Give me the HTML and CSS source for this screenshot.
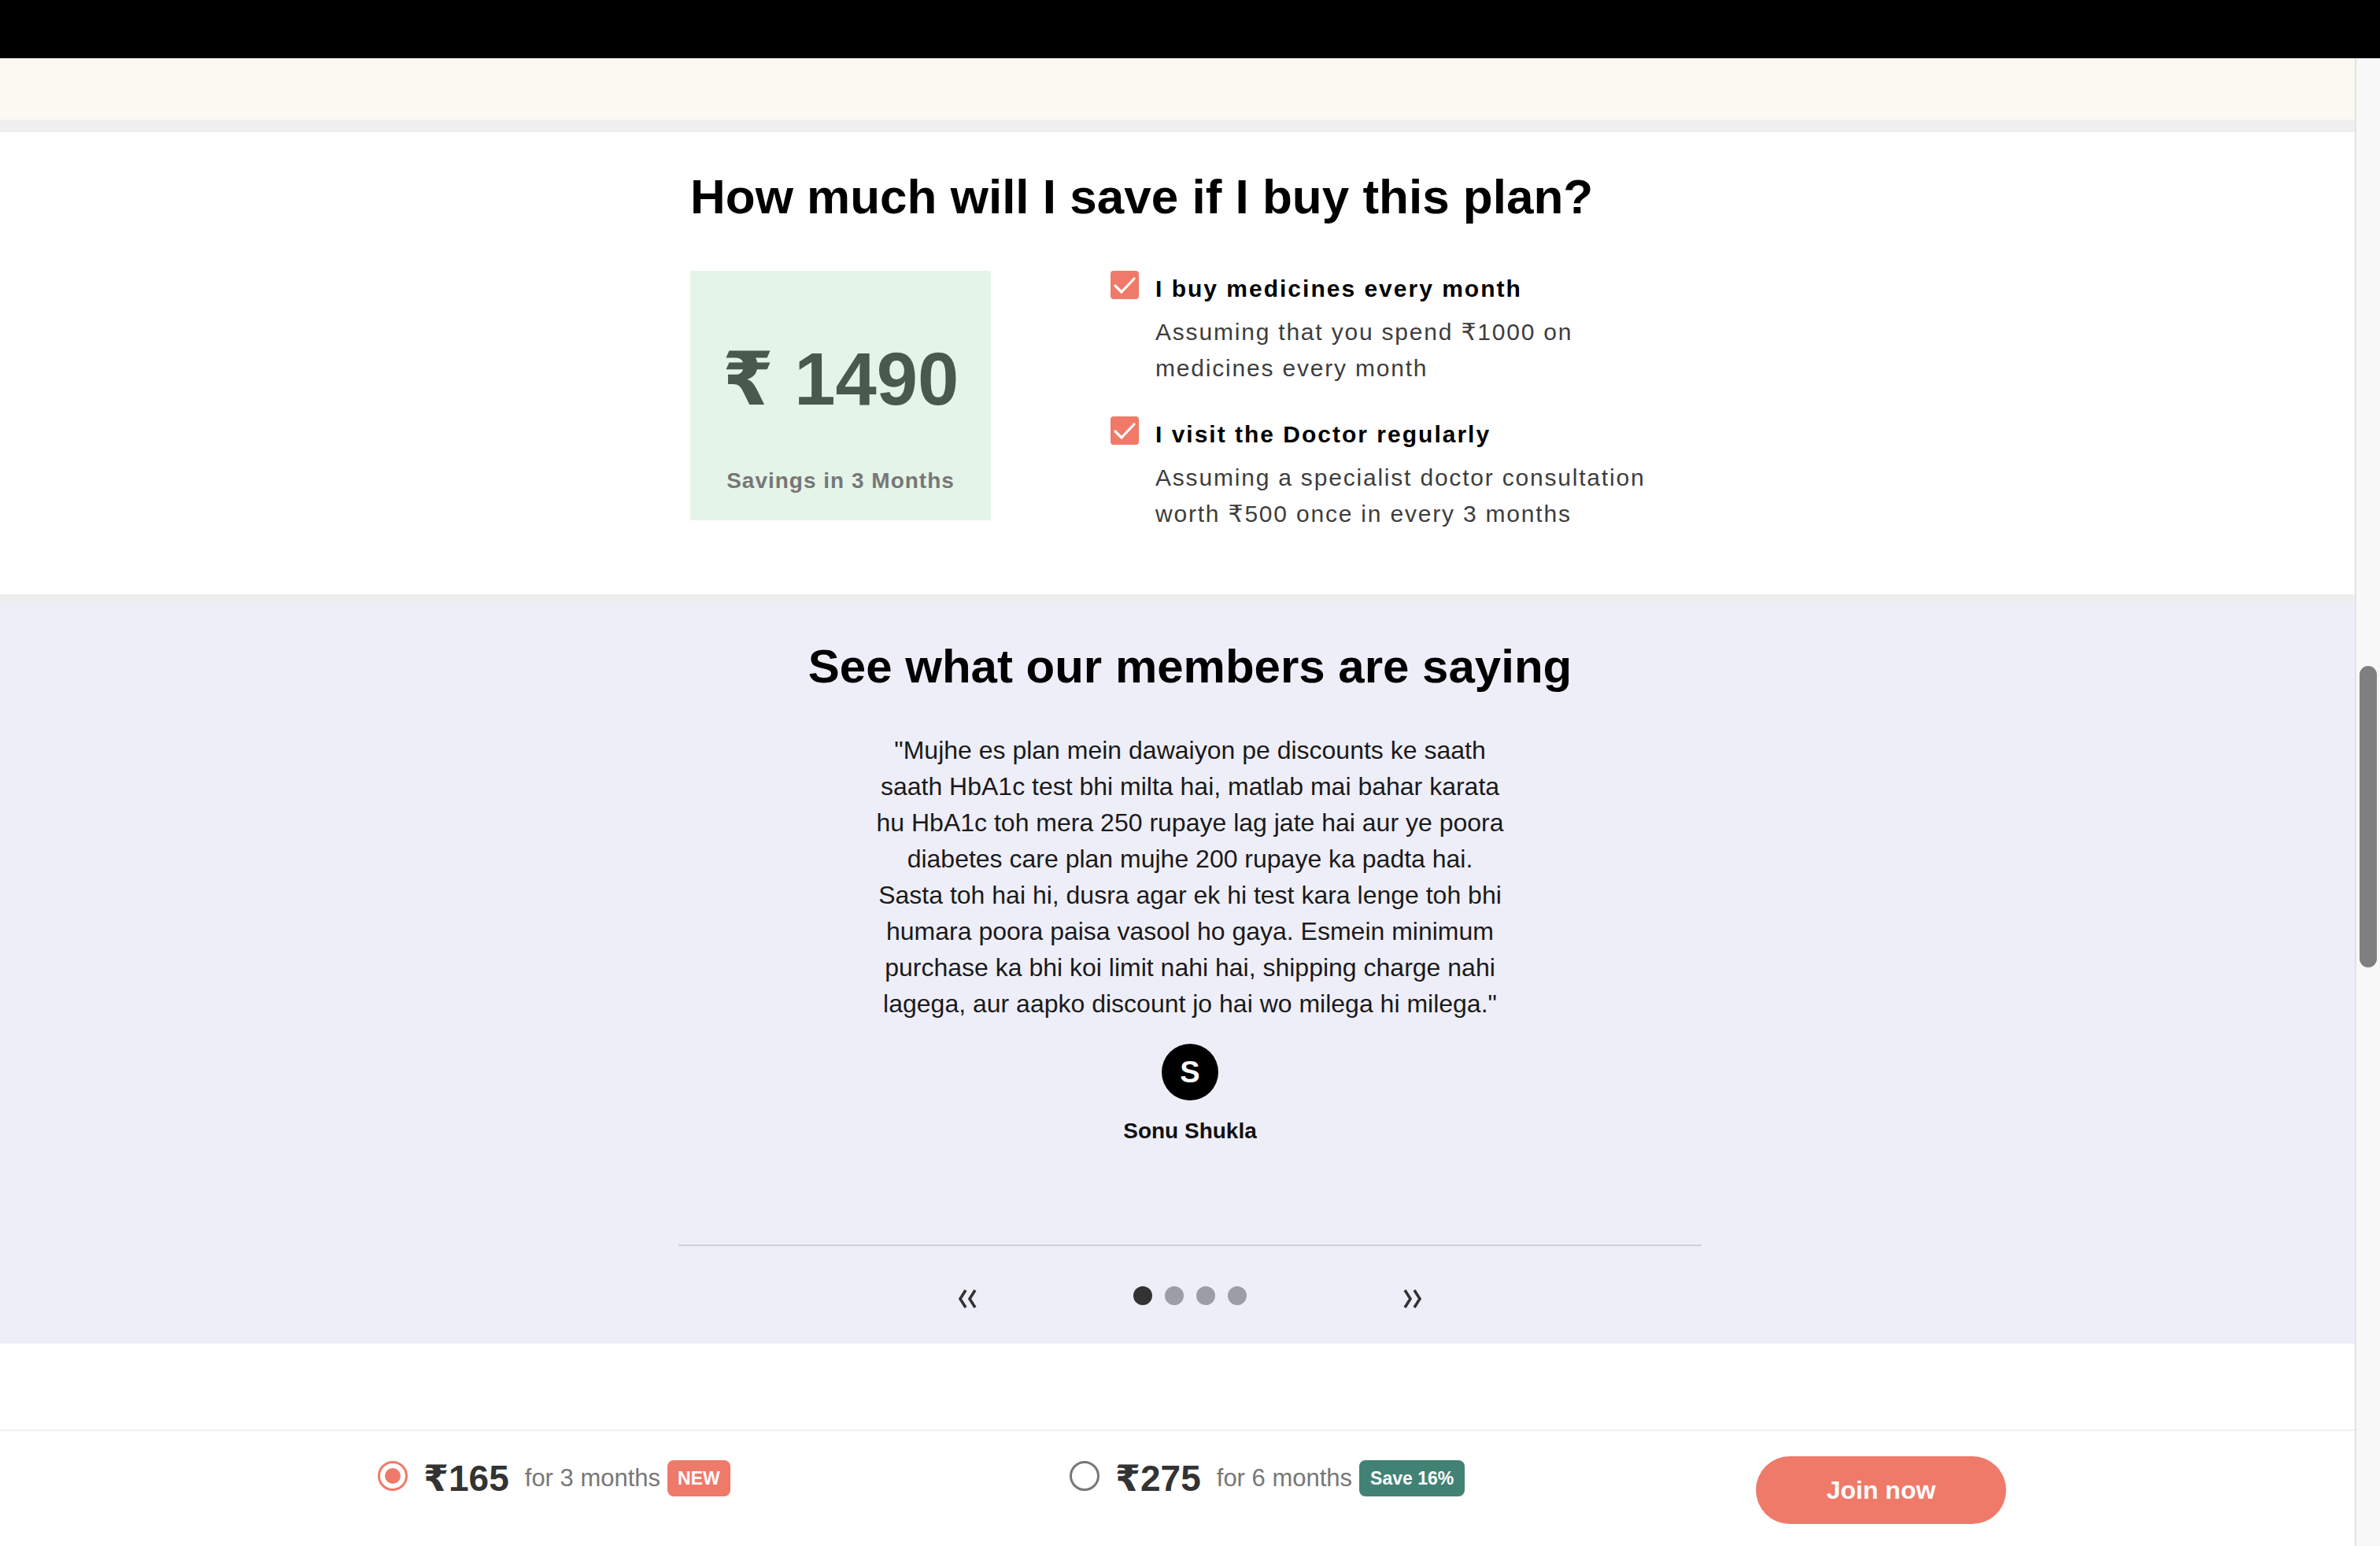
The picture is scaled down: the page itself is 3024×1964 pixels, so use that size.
FILE: index.html
```html
<!DOCTYPE html>
<html lang="en">
<head>
<meta charset="utf-8">
<title>Plan savings</title>
<link rel="stylesheet" href="styles.css">
</head>
<body>
<div class="topbar"></div>
<div class="cream-band"></div>
<div class="gray-band"></div>

<section class="savings">
  <div class="container">
    <h1 class="savings-title">How much will I save if I buy this plan?</h1>
    <div class="savings-row">
      <div class="savings-box">
        <div class="savings-amount">₹ 1490</div>
        <div class="savings-label">Savings in 3 Months</div>
      </div>
      <div class="savings-list">
        <div class="savings-item">
          <svg class="check" width="36" height="36" viewBox="0 0 36 36"><rect width="36" height="36" rx="4" fill="#ef7a6a"/><polyline points="6,19 14,27 30,10" fill="none" stroke="#fff" stroke-width="3.2" stroke-linecap="round" stroke-linejoin="round"/></svg>
          <div class="item-text">
            <div class="item-title">I buy medicines every month</div>
            <div class="item-desc">Assuming that you spend ₹1000 on<br>medicines every month</div>
          </div>
        </div>
        <div class="savings-item">
          <svg class="check" width="36" height="36" viewBox="0 0 36 36"><rect width="36" height="36" rx="4" fill="#ef7a6a"/><polyline points="6,19 14,27 30,10" fill="none" stroke="#fff" stroke-width="3.2" stroke-linecap="round" stroke-linejoin="round"/></svg>
          <div class="item-text">
            <div class="item-title">I visit the Doctor regularly</div>
            <div class="item-desc">Assuming a specialist doctor consultation<br>worth ₹500 once in every 3 months</div>
          </div>
        </div>
      </div>
    </div>
  </div>
</section>

<div class="section-sep"></div>

<section class="reviews">
  <h2 class="reviews-title">See what our members are saying</h2>
  <p class="quote">"Mujhe es plan mein dawaiyon pe discounts ke saath<br>saath HbA1c test bhi milta hai, matlab mai bahar karata<br>hu HbA1c toh mera 250 rupaye lag jate hai aur ye poora<br>diabetes care plan mujhe 200 rupaye ka padta hai.<br>Sasta toh hai hi, dusra agar ek hi test kara lenge toh bhi<br>humara poora paisa vasool ho gaya. Esmein minimum<br>purchase ka bhi koi limit nahi hai, shipping charge nahi<br>lagega, aur aapko discount jo hai wo milega hi milega."</p>
  <div class="avatar">S</div>
  <div class="reviewer">Sonu Shukla</div>
  <div class="reviews-divider"></div>
  <div class="carousel-nav">
    <svg class="arrow" width="28" height="24" viewBox="0 0 28 24"><polyline points="12,1 5,12 12,23" fill="none" stroke="#333" stroke-width="3.6"/><polyline points="24,1 17,12 24,23" fill="none" stroke="#333" stroke-width="3.6"/></svg>
    <div class="dots">
      <span class="dot dot-active"></span>
      <span class="dot"></span>
      <span class="dot"></span>
      <span class="dot"></span>
    </div>
    <svg class="arrow" width="28" height="24" viewBox="0 0 28 24"><polyline points="4,1 11,12 4,23" fill="none" stroke="#333" stroke-width="3.6"/><polyline points="16,1 23,12 16,23" fill="none" stroke="#333" stroke-width="3.6"/></svg>
  </div>
</section>

<div class="spacer"></div>

<footer class="plan-bar">
  <div class="plan-option">
    <span class="radio radio-on"><span class="radio-dot"></span></span>
    <span class="plan-price">₹165</span>
    <span class="plan-period">for 3 months</span>
    <span class="badge badge-new">NEW</span>
  </div>
  <div class="plan-option">
    <span class="radio"></span>
    <span class="plan-price">₹275</span>
    <span class="plan-period">for 6 months</span>
    <span class="badge badge-save">Save 16%</span>
  </div>
  <button class="join-btn">Join now</button>
</footer>

<div class="scrollbar"><div class="scroll-thumb"></div></div>
</body>
</html>
```

FILE: styles.css
```css
* { box-sizing: border-box; }

html, body {
  margin: 0;
  padding: 0;
}

body {
  width: 3024px;
  height: 1964px;
  overflow: hidden;
  position: relative;
  background: #fff;
  font-family: "Liberation Sans", Arial, "DejaVu Sans", sans-serif;
  color: #000;
}

.topbar { height: 74px; background: #000; }
.cream-band { height: 78px; background: #fcf9f2; }
.gray-band { height: 16px; background: #efefef; }

.savings {
  padding: 46px 0 79px;
  background: #fff;
}

.container {
  width: 1300px;
  margin: 0 auto;
  padding: 0 15px;
}

.savings-title {
  margin: 0 0 58px;
  font-size: 62px;
  line-height: 72px;
  font-weight: 700;
  color: #000;
}

.savings-row {
  display: flex;
  align-items: flex-start;
}

.savings-box {
  width: 382px;
  height: 317px;
  padding-top: 88px;
  background: #e5f4e8;
  text-align: center;
}

.savings-amount {
  font-size: 94px;
  line-height: 100px;
  font-weight: 700;
  color: #4a594e;
}

.savings-label {
  margin-top: 62px;
  font-size: 28px;
  line-height: 34px;
  font-weight: 700;
  letter-spacing: 1px;
  color: #777;
}

.savings-list {
  margin-left: 152px;
  display: flex;
  flex-direction: column;
  gap: 38px;
}

.savings-item {
  display: flex;
  align-items: flex-start;
  gap: 21px;
}

.check { flex: none; display: block; }

.item-title {
  font-size: 30px;
  line-height: 46px;
  font-weight: 700;
  letter-spacing: 2px;
  color: #000;
}

.item-desc {
  margin-top: 9px;
  font-size: 30px;
  line-height: 46px;
  letter-spacing: 1.8px;
  color: #3d3d3d;
}

.section-sep { height: 10px; background: #eeeeee; }

.reviews {
  background: #eeeef9;
  padding: 46px 0 45px;
  display: flex;
  flex-direction: column;
  align-items: center;
}

.reviews-title {
  margin: 0;
  font-size: 60px;
  line-height: 72px;
  font-weight: 700;
  color: #000;
}

.quote {
  margin: 47px 0 0;
  font-size: 32px;
  line-height: 46px;
  text-align: center;
  color: #1a1a1a;
  white-space: nowrap;
}

.avatar {
  margin-top: 28px;
  width: 72px;
  height: 72px;
  border-radius: 50%;
  background: #000;
  color: #fff;
  font-size: 38px;
  font-weight: 700;
  line-height: 72px;
  text-align: center;
}

.reviewer {
  margin-top: 22px;
  font-size: 28px;
  line-height: 34px;
  font-weight: 700;
  color: #111;
}

.reviews-divider {
  margin-top: 127px;
  width: 1300px;
  height: 2px;
  background: #d0d0d6;
}

.carousel-nav {
  margin-top: 51px;
  height: 28px;
  display: flex;
  align-items: flex-start;
  gap: 197px;
}

.arrow { display: block; margin-top: 4px; }

.dots { display: flex; gap: 16px; }

.dot {
  width: 24px;
  height: 24px;
  border-radius: 50%;
  background: #9d9da6;
}

.dot-active { background: #333; }

.spacer { height: 109px; background: #fff; }

.plan-bar {
  border-top: 2px solid #eef0f3;
  padding: 32px 0 0 480px;
  display: grid;
  grid-template-columns: 879px 872px 318px;
  align-items: start;
  background: #fff;
  height: 148px;
}

.plan-option {
  display: flex;
  align-items: center;
  height: 56px;
}

.radio {
  width: 38px;
  height: 38px;
  border-radius: 50%;
  border: 3px solid #777;
  margin-bottom: 7px;
  display: flex;
  align-items: center;
  justify-content: center;
  flex: none;
}

.radio-on { border-color: #ef7a6a; }

.radio-dot {
  width: 20px;
  height: 20px;
  border-radius: 50%;
  background: #ef7a6a;
}

.plan-price {
  margin-left: 20px;
  font-size: 46px;
  line-height: 56px;
  font-weight: 700;
  color: #333;
}

.plan-period {
  margin-left: 20px;
  font-size: 31px;
  line-height: 40px;
  color: #777;
}

.badge {
  margin-left: 9px;
  height: 46px;
  padding: 0 13px;
  border-radius: 8px;
  font-size: 23px;
  line-height: 46px;
  font-weight: 700;
  color: #fff;
}

.badge-new { background: #ef7a6a; }
.badge-save { background: #428274; padding: 0 14px; }

.join-btn {
  width: 318px;
  height: 86px;
  border: none;
  border-radius: 43px;
  background: #ef7a6a;
  color: #fff;
  font-family: inherit;
  font-size: 32px;
  font-weight: 700;
  padding: 0;
}

.scrollbar {
  position: absolute;
  top: 74px;
  right: 0;
  bottom: 0;
  width: 32px;
  background: #f8f8f8;
  border-left: 2px solid #e2e2e2;
}

.scroll-thumb {
  position: absolute;
  top: 772px;
  left: 4px;
  width: 22px;
  height: 383px;
  border-radius: 11px;
  background: #7f7f7f;
}
```
